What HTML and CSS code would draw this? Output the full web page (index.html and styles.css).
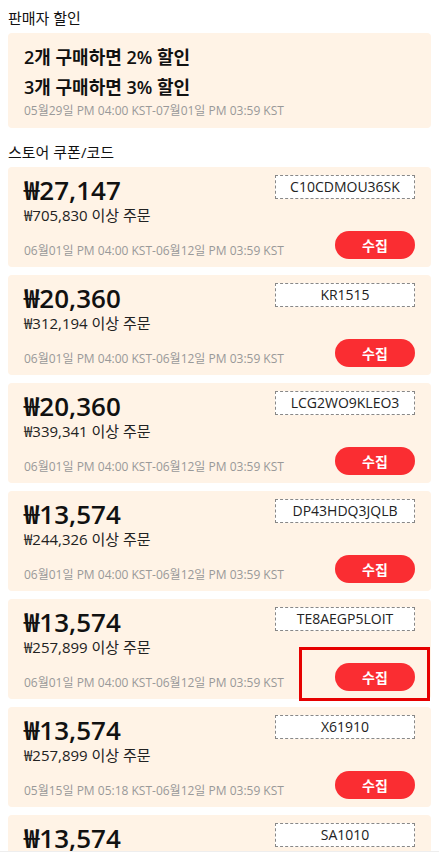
FILE: index.html
```html
<!DOCTYPE html>
<html lang="ko">
<head>
<meta charset="utf-8">
<link rel="stylesheet" href="styles.css">
</head>
<body>
<div class="page">
  <div class="section-title">판매자 할인</div>
  <div class="discount-box">
    <div class="discount-line">2개 구매하면 2% 할인</div>
    <div class="discount-line">3개 구매하면 3% 할인</div>
    <div class="date">05월29일 PM 04:00 KST-07월01일 PM 03:59 KST</div>
  </div>

  <div class="section-title second">스토어 쿠폰/코드</div>
  <div class="coupons">
    <div class="card">
      <div class="left">
        <div class="price">₩27,147</div>
        <div class="cond">₩705,830 이상 주문</div>
        <div class="date">06월01일 PM 04:00 KST-06월12일 PM 03:59 KST</div>
      </div>
      <div class="right">
        <div class="code">C10CDMOU36SK</div>
        <button class="collect">수집</button>
      </div>
    </div>
    <div class="card">
      <div class="left">
        <div class="price">₩20,360</div>
        <div class="cond">₩312,194 이상 주문</div>
        <div class="date">06월01일 PM 04:00 KST-06월12일 PM 03:59 KST</div>
      </div>
      <div class="right">
        <div class="code">KR1515</div>
        <button class="collect">수집</button>
      </div>
    </div>
    <div class="card">
      <div class="left">
        <div class="price">₩20,360</div>
        <div class="cond">₩339,341 이상 주문</div>
        <div class="date">06월01일 PM 04:00 KST-06월12일 PM 03:59 KST</div>
      </div>
      <div class="right">
        <div class="code">LCG2WO9KLEO3</div>
        <button class="collect">수집</button>
      </div>
    </div>
    <div class="card">
      <div class="left">
        <div class="price">₩13,574</div>
        <div class="cond">₩244,326 이상 주문</div>
        <div class="date">06월01일 PM 04:00 KST-06월12일 PM 03:59 KST</div>
      </div>
      <div class="right">
        <div class="code">DP43HDQ3JQLB</div>
        <button class="collect">수집</button>
      </div>
    </div>
    <div class="card">
      <div class="left">
        <div class="price">₩13,574</div>
        <div class="cond">₩257,899 이상 주문</div>
        <div class="date">06월01일 PM 04:00 KST-06월12일 PM 03:59 KST</div>
      </div>
      <div class="right">
        <div class="code">TE8AEGP5LOIT</div>
        <button class="collect">수집</button>
      </div>
      <div class="highlight"></div>
    </div>
    <div class="card">
      <div class="left">
        <div class="price">₩13,574</div>
        <div class="cond">₩257,899 이상 주문</div>
        <div class="date">05월15일 PM 05:18 KST-06월12일 PM 03:59 KST</div>
      </div>
      <div class="right">
        <div class="code">X61910</div>
        <button class="collect">수집</button>
      </div>
    </div>
    <div class="card">
      <div class="left">
        <div class="price">₩13,574</div>
        <div class="cond">₩257,899 이상 주문</div>
        <div class="date">05월15일 PM 05:18 KST-06월12일 PM 03:59 KST</div>
      </div>
      <div class="right">
        <div class="code">SA1010</div>
        <button class="collect">수집</button>
      </div>
    </div>
  </div>
</div>
<div class="bottom-bar"></div>
</body>
</html>
```

FILE: styles.css
```css
* { box-sizing: border-box; }
html, body { margin: 0; padding: 0; background: #fff; }
body {
  font-family: "Open Sans", "Noto Sans CJK KR", sans-serif;
  color: #222;
}
.page { padding: 8px; }
.section-title {
  font-size: 15px;
  line-height: 20px;
  color: #111;
  margin-bottom: 5px;
}
.section-title.second { margin-top: 14px; }
.discount-box {
  background: #fff3e6;
  border-radius: 4px;
  padding: 9px 16px 8px;
}
.discount-line {
  font-size: 18px;
  line-height: 30px;
  font-weight: 600;
  color: #111;
}
.date {
  font-size: 12px;
  line-height: 18px;
  color: #999;
  white-space: nowrap;
}
.coupons {
  display: flex;
  flex-direction: column;
  gap: 8px;
}
.card {
  position: relative;
  background: #fff3e6;
  border-radius: 4px;
  height: 100px;
  padding: 8px 16px;
  display: flex;
  justify-content: space-between;
}
.left {
  display: flex;
  flex-direction: column;
  flex: 1;
  min-width: 0;
}
.price {
  font-size: 26px;
  line-height: 30px;
  font-weight: 600;
  color: #111;
  white-space: nowrap;
}
.cond {
  font-size: 15px;
  line-height: 20px;
  color: #222;
  white-space: nowrap;
}
.left .date { margin-top: auto; margin-bottom: -1px; }
.right {
  flex-shrink: 0;
  display: flex;
  flex-direction: column;
  justify-content: space-between;
  align-items: flex-end;
}
.code {
  width: 140px;
  height: 24px;
  border: 1px dashed #888;
  background: #fff;
  font-size: 14px;
  line-height: 22px;
  text-align: center;
  color: #222;
  font-weight: 500;
}
.collect {
  width: 80px;
  height: 28px;
  border: none;
  border-radius: 14px;
  background: #fa2d32;
  color: #fff;
  font-family: "Open Sans", "Noto Sans CJK KR", sans-serif;
  font-size: 14px;
  font-weight: 700;
  padding: 0;
}
.highlight {
  position: absolute;
  left: 291px;
  top: 48px;
  width: 131px;
  height: 54px;
  border: 3px solid #e60000;
}
.bottom-bar {
  position: fixed;
  left: 0;
  right: 0;
  bottom: 0;
  height: 14px;
  background: #fff;
  border-top: 1px solid #eee;
}
```
